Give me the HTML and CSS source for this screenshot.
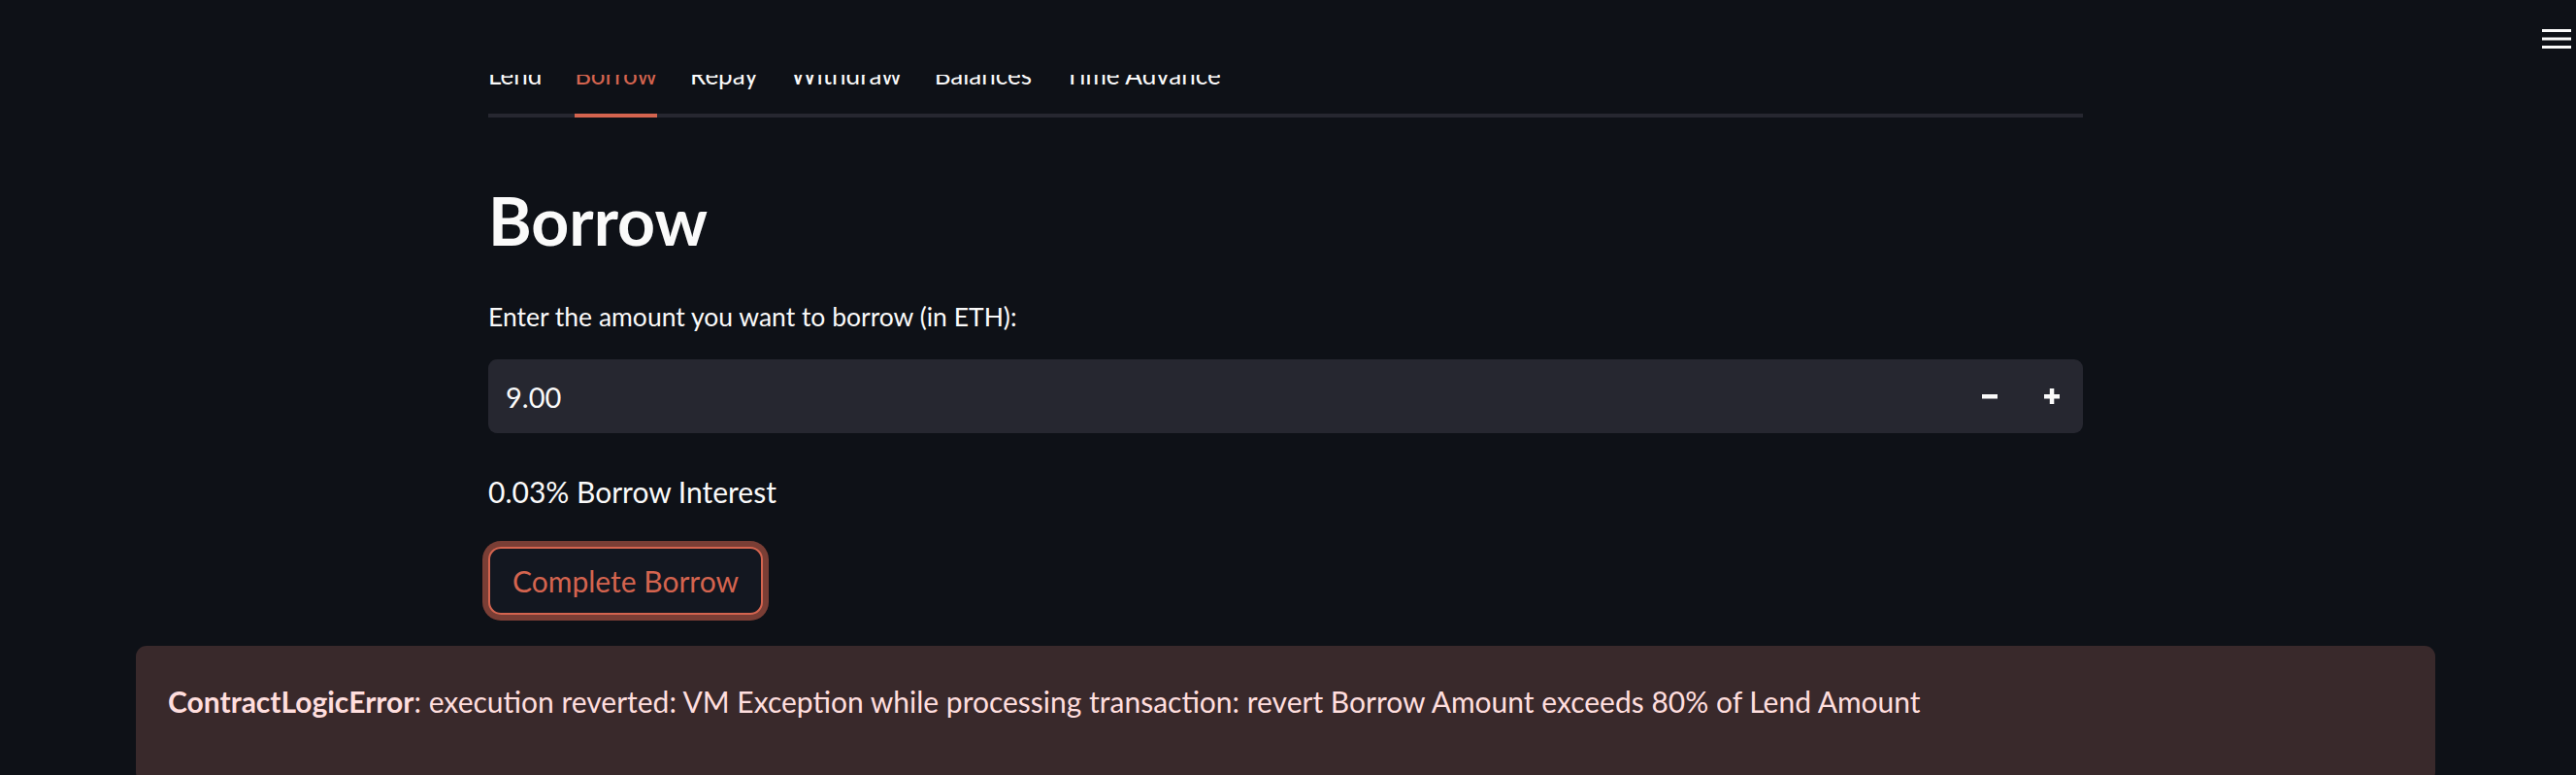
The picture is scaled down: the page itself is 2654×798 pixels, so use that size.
FILE: index.html
```html
<!DOCTYPE html>
<html lang="en">
<head>
<meta charset="utf-8">
<title>Borrow</title>
<link rel="stylesheet" href="styles.css">
</head>
<body>
<header class="app-header">
  <button class="menu-btn" aria-label="Main menu">
    <svg width="30" height="20" viewBox="0 0 30 20"><rect x="0" y="0" width="30" height="3"/><rect x="0" y="8.5" width="30" height="3"/><rect x="0" y="17" width="30" height="3"/></svg>
  </button>
</header>
<div class="page">
  <main class="block">
    <nav class="tab-list">
      <span class="tab">Lend</span>
      <span class="tab active">Borrow</span>
      <span class="tab">Repay</span>
      <span class="tab">Withdraw</span>
      <span class="tab">Balances</span>
      <span class="tab">Time Advance</span>
    </nav>
    <h1 class="title">Borrow</h1>
    <label class="field-label">Enter the amount you want to borrow (in ETH):</label>
    <div class="number-input">
      <span class="value">9.00</span>
      <span class="step" aria-label="decrement">
        <svg width="16" height="16" viewBox="0 0 16 16"><rect x="0" y="6" width="16" height="4.5"/></svg>
      </span>
      <span class="step" aria-label="increment">
        <svg width="16" height="16" viewBox="0 0 16 16"><rect x="0" y="6" width="16" height="4.5"/><rect x="5.8" y="0" width="4.5" height="16"/></svg>
      </span>
    </div>
    <p class="text">0.03% Borrow Interest</p>
    <button class="btn">Complete Borrow</button>
  </main>
  <div class="alert">
    <strong>ContractLogicError</strong>: execution reverted: VM Exception while processing transaction: revert Borrow Amount exceeds 80% of Lend Amount
  </div>
</div>
</body>
</html>
```
FILE: styles.css
```css
html, body {
  margin: 0;
  padding: 0;
  background: #0e1117;
  color: #fafafa;
  font-family: Lato, "Noto Sans", sans-serif;
  overflow: hidden;
}

.app-header {
  position: fixed;
  top: 0;
  left: 0;
  right: 0;
  height: 77px;
  background: #0e1117;
  z-index: 10;
}

.menu-btn {
  position: absolute;
  top: 30px;
  right: 5px;
  padding: 0;
  border: 0;
  background: none;
  display: block;
  line-height: 0;
}
.menu-btn svg { fill: #fafafa; }

.page {
  padding-right: 5px;
  display: flex;
  flex-direction: column;
  align-items: center;
}

.block {
  width: 1643px;
  padding-top: 57px;
  display: flex;
  flex-direction: column;
  align-items: flex-start;
}

.tab-list {
  align-self: stretch;
  display: flex;
  gap: 34px;
  border-bottom: 4px solid #262730;
}

.tab {
  font-size: 26px;
  line-height: 40px;
  padding-bottom: 20px;
  color: #fafafa;
}
.tab.active {
  color: #d4644f;
  border-bottom: 4px solid #d4644f;
  margin-bottom: -4px;
}

.title {
  margin: 65px 0 0;
  font-size: 68px;
  line-height: 82px;
  font-weight: 700;
}

.field-label {
  margin-top: 37px;
  font-size: 26.5px;
  line-height: 42px;
}

.number-input {
  align-self: stretch;
  margin-top: 23px;
  height: 76px;
  background: #262730;
  border-radius: 9px;
  display: flex;
  align-items: center;
  padding-left: 18px;
}
.number-input .value {
  flex: 1;
  font-size: 29px;
}
.step {
  width: 64px;
  height: 76px;
  display: flex;
  align-items: center;
  justify-content: center;
}
.step svg { fill: #fafafa; }

.text {
  margin: 36px 0 0;
  font-size: 30px;
  line-height: 48px;
}

.btn {
  margin-top: 33px;
  height: 70px;
  padding: 0 23px;
  border: 2px solid #d4644f;
  border-radius: 13px;
  background: #131720;
  color: #d4644f;
  font-family: inherit;
  font-size: 30px;
  box-shadow: 0 0 0 6px rgba(212, 100, 79, 0.55);
}

.alert {
  margin-top: 32px;
  width: 2369px;
  box-sizing: border-box;
  padding: 33px 33px 60px;
  background: #39292b;
  color: #ffdede;
  border-radius: 11px;
  font-size: 30px;
  line-height: 48px;
}
.alert strong { font-weight: 700; }
```
